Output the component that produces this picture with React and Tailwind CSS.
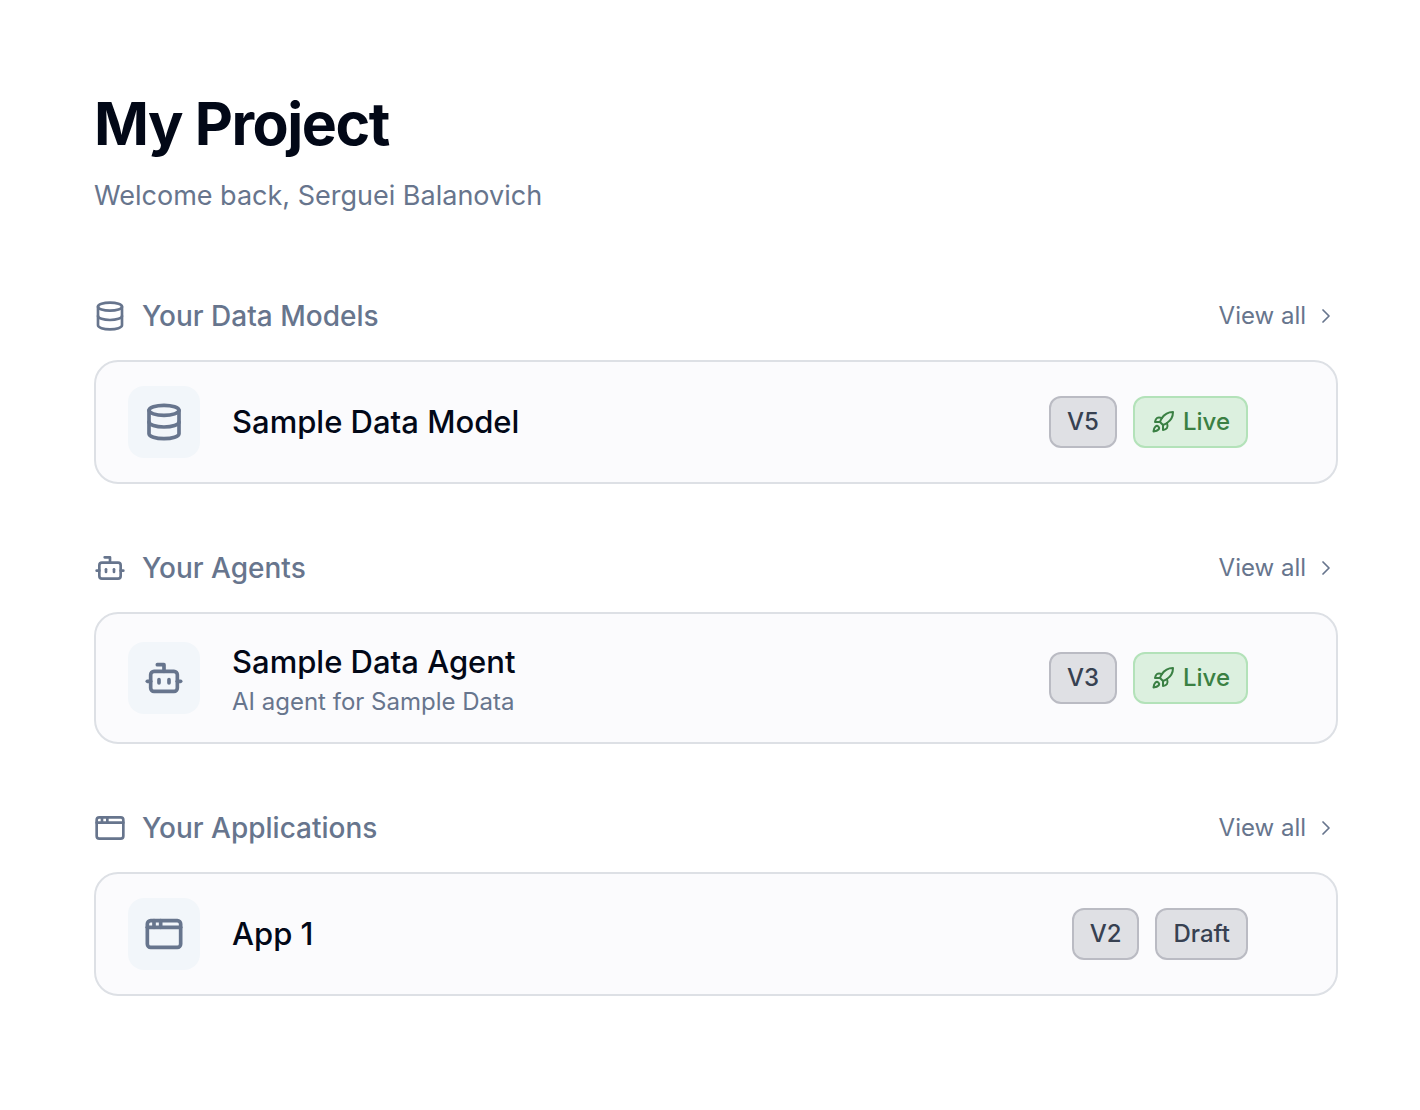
import { AppWindow, Bot, ChevronRight, Database, Rocket } from "lucide-react";

const sections = [
  {
    title: "Your Data Models",
    href: "#data-models",
    icon: Database,
    items: [{ name: "Sample Data Model", version: "V5", live: true }],
  },
  {
    title: "Your Agents",
    href: "#agents",
    icon: Bot,
    items: [
      {
        name: "Sample Data Agent",
        description: "AI agent for Sample Data",
        version: "V3",
        live: true,
      },
    ],
  },
  {
    title: "Your Applications",
    href: "#applications",
    icon: AppWindow,
    items: [{ name: "App 1", version: "V2", live: false }],
  },
];

function Badge({ live, children }) {
  return (
    <span
      className={`flex items-center gap-2 rounded-xl border-2 px-4 py-2 text-2xl font-medium ${
        live
          ? "border-[#b3e2b9] bg-[#dcf0df] text-[#3a8043]"
          : "border-[#babbc3] bg-[#dfe0e4] text-[#374151]"
      }`}
    >
      {live && <Rocket size={24} />}
      {children}
    </span>
  );
}

function ItemCard({ icon: Icon, item }) {
  return (
    <div className="flex items-center gap-8 rounded-3xl border-2 border-[#dde0e5] bg-[#fbfbfd] py-6 pl-8 pr-22">
      <div className="flex size-18 shrink-0 items-center justify-center rounded-2xl bg-[#f2f6fa] text-[#67758d]">
        <Icon size={40} strokeWidth={2.2} />
      </div>
      <div className="min-w-0 flex-1">
        <h3 className="text-[31px]/12 font-medium text-[#020817]">{item.name}</h3>
        {item.description && (
          <p className="text-2xl text-[#67758d]">{item.description}</p>
        )}
      </div>
      <div className="flex items-center gap-4">
        <Badge>{item.version}</Badge>
        <Badge live={item.live}>{item.live ? "Live" : "Draft"}</Badge>
      </div>
    </div>
  );
}

function Section({ title, href, icon: Icon, items }) {
  return (
    <section>
      <div className="mb-6 flex items-center justify-between text-[#67758d]">
        <h2 className="flex items-center gap-4 text-[28px]/10 font-medium">
          <Icon size={32} />
          {title}
        </h2>
        <a href={href} className="flex items-center gap-2 text-2xl">
          View all
          <ChevronRight size={24} strokeWidth={1.75} />
        </a>
      </div>
      {items.map((item) => (
        <ItemCard key={item.name} icon={Icon} item={item} />
      ))}
    </section>
  );
}

export default function App() {
  return (
    <main className="min-h-screen bg-white pt-22 pr-[82px] pb-22 pl-[94px] font-['Inter',sans-serif]">
      <header className="mb-20">
        <h1 className="mb-4 text-[59px]/18 font-bold tracking-tight text-[#020817]">My Project</h1>
        <p className="text-[27px]/10 text-[#67758d]">Welcome back, Serguei Balanovich</p>
      </header>
      <div className="flex flex-col gap-16">
        {sections.map((section) => (
          <Section key={section.title} {...section} />
        ))}
      </div>
    </main>
  );
}
